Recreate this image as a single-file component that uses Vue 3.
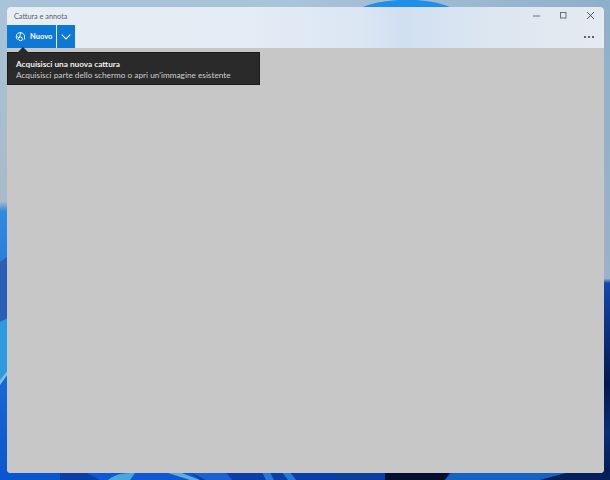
<template>
  <div class="desktop">
    <!-- wallpaper, only the edges show round the window -->
    <svg class="wallpaper" viewBox="0 0 610 480" preserveAspectRatio="none">
      <defs>
        <linearGradient id="leftSide" x1="0" y1="0" x2="0" y2="1">
          <stop offset="0" stop-color="#a9c3d8" />
          <stop offset="0.42" stop-color="#a9bac8" />
          <stop offset="0.44" stop-color="#2f8ae0" />
          <stop offset="1" stop-color="#0a55d0" />
        </linearGradient>
        <linearGradient id="rightSide" x1="0" y1="0" x2="0" y2="1">
          <stop offset="0" stop-color="#8fb0ca" />
          <stop offset="0.58" stop-color="#9ab2ca" />
          <stop offset="0.59" stop-color="#1348ac" />
          <stop offset="0.8" stop-color="#05174f" />
          <stop offset="0.9" stop-color="#0a2f78" />
          <stop offset="1" stop-color="#05174f" />
        </linearGradient>
        <linearGradient id="topStrip" x1="0" y1="0" x2="1" y2="0">
          <stop offset="0" stop-color="#a9c3d8" />
          <stop offset="1" stop-color="#8fb0ca" />
        </linearGradient>
      </defs>
      <rect width="610" height="480" fill="url(#leftSide)" />
      <rect x="300" width="310" height="8" fill="url(#topStrip)" />
      <rect x="598" width="12" height="480" fill="url(#rightSide)" />
      <path d="M360 8C385 -3 430 -3 452 8Z" fill="#1f8fe8" />
      <path d="M0 262L8 256V318L0 322Z" fill="#2a5fb8" />
      <path d="M0 322L8 318V370L0 380Z" fill="#2e9be0" />
      <path d="M0 380L8 370V374L0 385Z" fill="#7cc0ea" />

      <!-- bottom strip -->
      <rect y="472" width="610" height="8" fill="#0a3fa8" />
      <rect y="472" width="60" height="8" fill="#0a55d0" />
      <path d="M85 472H190L200 480H100Z" fill="#0e58d4" />
      <path d="M108 480C115 474 122 473 135 473L130 480Z" fill="#4aa8dc" />
      <path d="M168 473H182L200 480H190Z" fill="#5fa8e0" />
      <path d="M190 472H226L232 480H206Z" fill="#1a63d0" />
      <path d="M262 472H270L274 480H266ZM282 472H290L296 480H288Z" fill="#2a78d8" />
      <path d="M340 472H385L365 480H335Z" fill="#0f3f9c" />
      <path d="M385 472H450L445 480H385Z" fill="#050f30" />
      <path d="M452 472H570L540 480H445Z" fill="#1763c4" />
      <path d="M570 472H610V480H540Z" fill="#06205c" />
    </svg>

    <div class="window">
      <div class="titlebar">
        <span class="title">Cattura e annota</span>
        <div class="controls">
          <svg width="10" height="10" viewBox="0 0 10 10"><path d="M1 5H8" stroke="#6b7176" /></svg>
          <svg width="10" height="10" viewBox="0 0 10 10"><rect x="1.5" y="1.5" width="5.5" height="5.5" fill="none" stroke="#6a7076" /></svg>
          <svg width="10" height="10" viewBox="0 0 10 10"><path d="M1 1L8 8M8 1L1 8" stroke="#3c4146" stroke-width="0.9" /></svg>
        </div>
      </div>

      <div class="toolbar">
        <button class="btn new-btn">
          <svg width="11" height="11" viewBox="0 0 12 12" fill="none" stroke="#fff" stroke-width="1">
            <path d="M2.6 9.4A4.8 4.8 0 0 1 3 2.6A4.7 4.7 0 0 1 10.4 7.4A1.6 1.6 0 0 1 9.4 9.6" />
            <circle cx="6" cy="8.6" r="2.1" />
            <path d="M1.8 5.8L4.2 7.2M6.4 1.4L5 6.6" />
          </svg>
          <span>Nuovo</span>
        </button>
        <button class="btn arrow-btn">
          <svg width="10" height="6" viewBox="0 0 10 6" fill="none" stroke="#fff" stroke-width="1.1">
            <path d="M.7 .7L5 5L9.3 .7" />
          </svg>
        </button>
        <div class="more"><i></i><i></i><i></i></div>
      </div>

      <div class="canvas">
        <div class="tooltip">
          <span class="tip-arrow"></span>
          <strong>Acquisisci una nuova cattura</strong>
          <span>Acquisisci parte dello schermo o apri un'immagine esistente</span>
        </div>
      </div>
    </div>
  </div>
</template>

<script setup>
</script>

<style>
html,
body {
  margin: 0;
  overflow: hidden;
}
</style>

<style scoped>
.desktop {
  position: relative;
  width: 610px;
  height: 480px;
  box-sizing: border-box;
  padding: 7px 6px 7px 7px;
  display: flex;
  font-family: Lato, "Noto Sans", sans-serif;
}

.wallpaper {
  position: absolute;
  inset: 0;
  width: 610px;
  height: 480px;
}

.window {
  position: relative;
  flex: 1;
  display: flex;
  flex-direction: column;
  border-radius: 4px;
  overflow: hidden;
  background: linear-gradient(90deg, #e6edf4 0%, #e4ecf5 40%, #dbe6f3 60%, #d0dff1 66%, #dde7f1 82%, #e4eaf0 100%);
}

.titlebar {
  height: 18px;
  display: flex;
  align-items: center;
  justify-content: space-between;
  padding-left: 7px;
}

.title {
  font-size: 7.3px;
  color: #5a5f63;
}

.controls {
  display: flex;
  gap: 17px;
  padding: 0 8px 0 0;
}

.toolbar {
  height: 23px;
  display: flex;
  align-items: stretch;
  gap: 1px;
}

.btn {
  border: 0;
  padding: 0;
  margin: 0;
  background: #0e78d6;
  color: #fff;
  display: flex;
  align-items: center;
  font-family: inherit;
}

.new-btn {
  width: 49px;
  padding-left: 8px;
  gap: 4px;
  font-size: 7.5px;
  font-weight: 700;
}

.arrow-btn {
  width: 18px;
  justify-content: center;
}

.more {
  margin-left: auto;
  display: flex;
  align-items: center;
  gap: 2px;
  padding-right: 10px;
}

.more i {
  width: 2px;
  height: 2px;
  border-radius: 50%;
  background: #30353a;
}

.canvas {
  flex: 1;
  background: #c7c7c7;
  position: relative;
}

.tooltip {
  position: absolute;
  left: 0;
  top: 4px;
  width: 253px;
  height: 33px;
  box-sizing: border-box;
  padding: 6px 8px 5px;
  background: #2a2a2a;
  border: 1px solid #1a1a1a;
  color: #e4e4e4;
  font-size: 8.25px;
  line-height: 11px;
  display: flex;
  flex-direction: column;
  white-space: nowrap;
}

.tooltip strong {
  font-weight: 700;
  color: #f0f0f0;
}

.tooltip span:last-child {
  color: #cfcfcf;
}

.tip-arrow {
  position: absolute;
  left: 9px;
  top: -6px;
  width: 0;
  height: 0;
  border-left: 6px solid transparent;
  border-right: 6px solid transparent;
  border-bottom: 6px solid #2a2a2a;
}
</style>
